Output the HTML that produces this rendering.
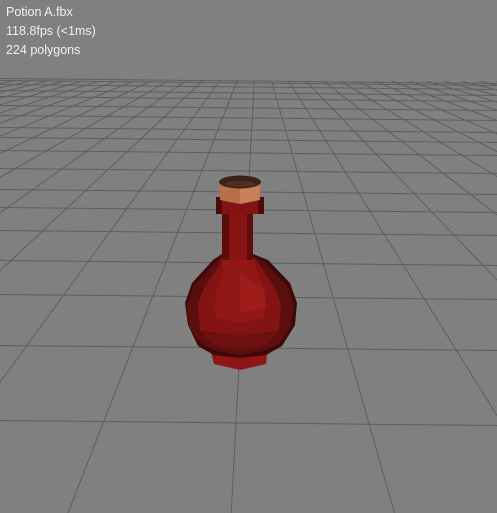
<!DOCTYPE html>
<html><head><meta charset="utf-8"><style>
html,body{margin:0;padding:0;width:497px;height:513px;overflow:hidden;background:#808080}
#t{position:absolute;left:6px;top:3px;color:#f0f0f0;font:12.5px/19px "Liberation Sans",sans-serif}
svg{position:absolute;left:0;top:0}
</style></head><body>
<svg id="g" width="497" height="513" viewBox="0 0 497 513"></svg>
<div id="t">Potion A.fbx<br>118.8fps (&lt;1ms)<br>224 polygons</div>
<script>
var s='',V=30,vx=257,k=0.338,c=-0.158;
var ys=[81,83,87,93,99,108,118,130,140,153,171,192,210,233,263,297,348,423];
for(var j=0;j<ys.length;j++){var y=ys[j];
s+='<line x1="0" y1="'+(y-2.5)+'" x2="497" y2="'+(y+2.5)+'" stroke="#5e5e5e" stroke-width="1"/>';}
s+='<clipPath id="cp"><rect x="0" y="81" width="497" height="432"/></clipPath><g clip-path="url(#cp)">';
for(var i=-60;i<=60;i++){var o=(i+c)*k;
s+='<line x1="'+(vx+o*(81-V))+'" y1="81" x2="'+(vx+o*(513-V))+'" y2="513" stroke="#5e5e5e" stroke-width="1"/>';}
s+='</g>';
// potion
s+='<polygon points="211,352 267,352 266,364 240,370 214,364" fill="#8e1616"/>';
s+='<polygon points="222,254 253,254 268,260 290,283 297,303 295,325 282,346 266,355 240,358 214,355 198,346 188,325 185,303 192,283 213,260" fill="#3c0808"/>';
s+='<polygon points="222,256 253,256 265,263 287,285 294,305 291,327 279,344 264,351 240,355 216,351 201,344 189,327 187,305 194,285 215,263" fill="#5a0e0e"/>';
s+='<polygon points="222,256 253,256 260,266 275,288 281,305 279,330 268,344 240,352 212,344 200,330 198,305 204,288 219,266" fill="#841414"/>';
s+='<polygon points="222,258 253,258 258,275 265,292 266,305 264,318 240,323 216,318 215,305 216,292 223,275" fill="#921818"/>';
s+='<polygon points="240,272 264,290 266,308 240,312" fill="#9e1c1a"/>';
s+='<polygon points="199,330 240,336 279,330 268,344 240,352 212,344" fill="#6c1010"/>';
s+='<rect x="222" y="212" width="31" height="48" fill="#861414"/><rect x="222" y="212" width="7" height="48" fill="#5a0c0c"/><rect x="247" y="212" width="6" height="48" fill="#5e0c0c"/>';
s+='<rect x="216" y="197" width="48" height="17" fill="#841414"/><rect x="216" y="197" width="6" height="17" fill="#4a0a0a"/><rect x="258" y="197" width="6" height="17" fill="#4a0a0a"/>';
s+='<polygon points="219,182 261,182 260,200 240,204 220,200" fill="#b87048"/><polygon points="240,185 260,184 259,200 240,204" fill="#c88058"/>';
s+='<ellipse cx="240" cy="182" rx="21" ry="6.5" fill="#3a2418"/><ellipse cx="240" cy="184" rx="15" ry="3" fill="#4e3020"/>';
document.getElementById('g').innerHTML=s;
</script>
</body></html>
